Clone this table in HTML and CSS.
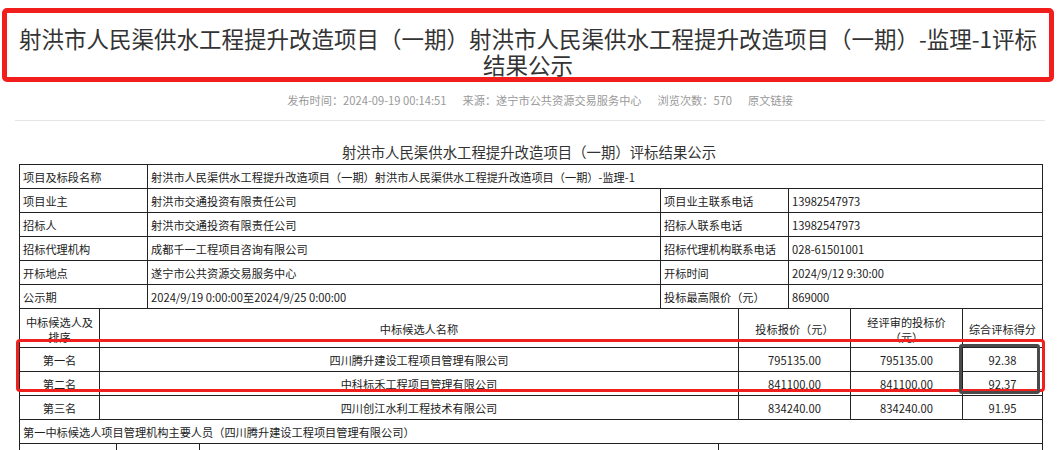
FILE: index.html
```html
<!DOCTYPE html>
<html lang="zh-CN">
<head>
<meta charset="utf-8">
<title>评标结果公示</title>
<link rel="stylesheet" href="styles.css">
</head>
<body>
<div class="page">
  <h1 class="title">射洪市人民渠供水工程提升改造项目（一期）射洪市人民渠供水工程提升改造项目（一期）-监理-1评标结果公示</h1>
  <div class="meta">
    <span>发布时间：2024-09-19 00:14:51</span>
    <span>来源：遂宁市公共资源交易服务中心</span>
    <span>浏览次数：570</span>
    <span>原文链接</span>
  </div>
  <div class="sep"></div>
  <div class="caption">射洪市人民渠供水工程提升改造项目（一期）评标结果公示</div>
  <div class="tables">
    <div class="grid g-info first">
      <div class="c">项目及标段名称</div>
      <div class="c span3">射洪市人民渠供水工程提升改造项目（一期）射洪市人民渠供水工程提升改造项目（一期）-监理-1</div>
      <div class="c">项目业主</div>
      <div class="c">射洪市交通投资有限责任公司</div>
      <div class="c">项目业主联系电话</div>
      <div class="c">13982547973</div>
      <div class="c">招标人</div>
      <div class="c">射洪市交通投资有限责任公司</div>
      <div class="c">招标人联系电话</div>
      <div class="c">13982547973</div>
      <div class="c">招标代理机构</div>
      <div class="c">成都千一工程项目咨询有限公司</div>
      <div class="c">招标代理机构联系电话</div>
      <div class="c">028-61501001</div>
      <div class="c">开标地点</div>
      <div class="c">遂宁市公共资源交易服务中心</div>
      <div class="c">开标时间</div>
      <div class="c">2024/9/12 9:30:00</div>
      <div class="c">公示期</div>
      <div class="c">2024/9/19 0:00:00至2024/9/25 0:00:00</div>
      <div class="c">投标最高限价（元）</div>
      <div class="c">869000</div>
    </div>
    <div class="grid g-cand">
      <div class="c ctr head"><span class="wrap">中标候选人及排序</span></div>
      <div class="c ctr head">中标候选人名称</div>
      <div class="c ctr head">投标报价（元）</div>
      <div class="c ctr head"><span class="wrap">经评审的投标价（元）</span></div>
      <div class="c ctr head">综合评标得分</div>
      <div class="c ctr">第一名</div>
      <div class="c ctr">四川腾升建设工程项目管理有限公司</div>
      <div class="c ctr">795135.00</div>
      <div class="c ctr">795135.00</div>
      <div class="c ctr">92.38</div>
      <div class="c ctr">第二名</div>
      <div class="c ctr">中科标禾工程项目管理有限公司</div>
      <div class="c ctr">841100.00</div>
      <div class="c ctr">841100.00</div>
      <div class="c ctr">92.37</div>
      <div class="c ctr">第三名</div>
      <div class="c ctr">四川创江水利工程技术有限公司</div>
      <div class="c ctr">834240.00</div>
      <div class="c ctr">834240.00</div>
      <div class="c ctr">91.95</div>
      <div class="c span5">第一中标候选人项目管理机构主要人员（四川腾升建设工程项目管理有限公司）</div>
    </div>
    <div class="grid g-staff">
      <div class="c"></div>
      <div class="c"></div>
      <div class="c"></div>
      <div class="c"></div>
    </div>
    <div class="mark-red"></div>
    <div class="mark-gray"></div>
  </div>
</div>
</body>
</html>
```

FILE: styles.css
```css
* { box-sizing: border-box; }
html, body {
  margin: 0;
  padding: 0;
  background: #fff;
}
body {
  font-family: "Noto Sans CJK SC", "Noto Sans", sans-serif;
  color: #333;
  width: 1058px;
  height: 450px;
  overflow: hidden;
}
.page {
  padding-top: 8px;
}
.title {
  margin: 0 0 0 2px;
  width: 1052px;
  height: 74px;
  border: 5px solid #f21d1d;
  border-radius: 5px;
  padding: 12px 11px 0;
  font-size: 22.5px;
  line-height: 26px;
  font-weight: normal;
  text-align: center;
  color: #333;
}
.meta {
  margin-top: 9px;
  display: flex;
  justify-content: center;
  gap: 16px;
  padding-left: 22px;
  font-size: 11.2px;
  line-height: 18px;
  color: #999;
}
.sep {
  margin: 11px 13px 0 15px;
  height: 1px;
  background: #e6e6e6;
}
.caption {
  margin-top: 21px;
  font-size: 14.4px;
  line-height: 20px;
  text-align: center;
  color: #333;
}
.tables {
  position: relative;
  margin: 2px 0 0 19px;
  width: 1024px;
  font-size: 11.2px;
  color: #222;
}
.grid {
  display: grid;
  border-left: 1px solid #222;
}
.grid.first {
  border-top: 1px solid #222;
}
.c {
  border-right: 1px solid #222;
  border-bottom: 1px solid #222;
  height: 24px;
  padding: 1px 3px 0;
  display: flex;
  align-items: center;
  white-space: nowrap;
  overflow: hidden;
}
.ctr {
  justify-content: center;
  text-align: center;
}
.span3 { grid-column: 2 / span 3; }
.span5 { grid-column: 1 / span 5; }
.g-info {
  grid-template-columns: 128px 513px 128px 254px;
}
.g-cand {
  grid-template-columns: 80px 639px 112px 112px 80px;
}
.g-cand .head {
  height: 39px;
}
.wrap {
  white-space: normal;
  line-height: 15px;
  display: block;
  padding-top: 2px;
}
.g-staff {
  grid-template-columns: 97px 83px 519px 324px;
}
.mark-red {
  position: absolute;
  left: -3px;
  top: 175px;
  width: 1029px;
  height: 53px;
  border: 3px solid #f0201e;
  border-radius: 4px;
  pointer-events: none;
}
.mark-gray {
  position: absolute;
  left: 940px;
  top: 180px;
  width: 81px;
  height: 50px;
  border: 3px solid #4a4a4a;
  border-radius: 3px;
  pointer-events: none;
}
```
